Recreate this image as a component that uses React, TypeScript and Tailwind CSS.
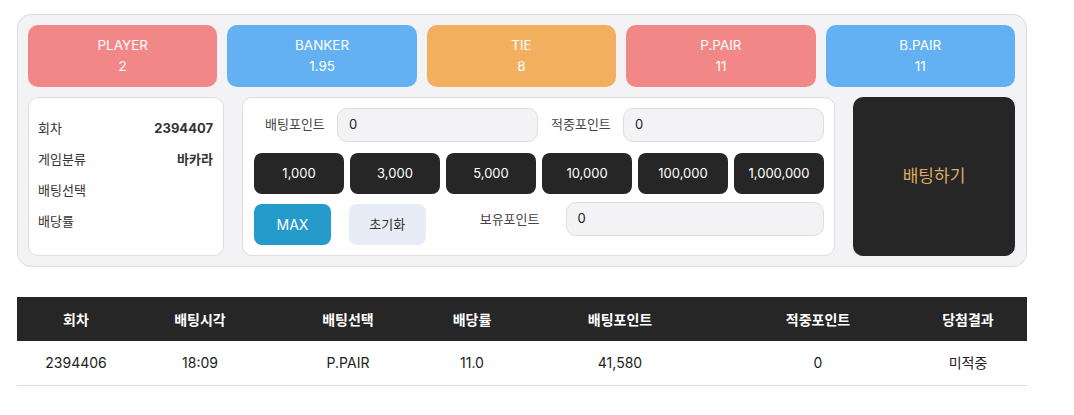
const font = { fontFamily: '"Inter", "Noto Sans CJK KR", sans-serif' };

const odds = [
  { name: "PLAYER", rate: "2", bg: "bg-[#f28787]" },
  { name: "BANKER", rate: "1.95", bg: "bg-[#63b0f2]" },
  { name: "TIE", rate: "8", bg: "bg-[#f2af5e]" },
  { name: "P.PAIR", rate: "11", bg: "bg-[#f28787]" },
  { name: "B.PAIR", rate: "11", bg: "bg-[#63b0f2]" },
];

const chips = ["1,000", "3,000", "5,000", "10,000", "100,000", "1,000,000"];

const info = [
  { k: "회차", v: "2394407" },
  { k: "게임분류", v: "바카라" },
  { k: "배팅선택", v: "" },
  { k: "배당률", v: "" },
];

const cols = [
  { t: "회차", w: "w-[118px]" },
  { t: "배팅시각", w: "w-[130px]" },
  { t: "배팅선택", w: "w-[166px]" },
  { t: "배당률", w: "w-[82px]" },
  { t: "배팅포인트", w: "w-[214px]" },
  { t: "적중포인트", w: "w-[182px]" },
  { t: "당첨결과", w: "w-[118px]" },
];

const row = ["2394406", "18:09", "P.PAIR", "11.0", "41,580", "0", "미적중"];

export default function App() {
  return (
    <div className="w-[1074px] h-[415px] bg-white text-[#222] pt-[14px] pl-[17px]" style={font}>
      <div className="w-[1010px] rounded-[14px] border border-[#dcdcdc] bg-[#f3f3f5] pt-[10px] pb-[10px] pl-[10px] pr-[11px]">
        {/* 배당 카드 */}
        <div className="grid grid-cols-5 gap-[10px]">
          {odds.map((o) => (
            <div key={o.name} className={`${o.bg} h-[62px] rounded-[10px] flex flex-col items-center justify-center text-white text-[13.5px] leading-[21px]`}>
              <span>{o.name}</span>
              <span>{o.rate}</span>
            </div>
          ))}
        </div>

        <div className="flex mt-[10px] h-[159px]">
          {/* 정보 */}
          <div className="w-[196px] rounded-[10px] border border-[#dedede] bg-white pl-[9px] pr-[10px] pt-[15px]">
            {info.map((it) => (
              <div key={it.k} className="flex justify-between items-center h-[31px] text-[13px]">
                <span className="text-[#333]">{it.k}</span>
                <span className="font-bold text-[#333]">{it.v}</span>
              </div>
            ))}
          </div>

          {/* 배팅 입력 */}
          <div className="ml-[18px] w-[593px] rounded-[10px] border border-[#dedede] bg-white pt-[10px] pl-[11px] pr-[10px]">
            <div className="flex items-center h-[34px] text-[13px]">
              <span className="ml-[11px] w-[72px] text-[#444]">배팅포인트</span>
              <div className="w-[201px] h-[34px] rounded-[10px] border border-[#dedede] bg-[#f3f3f5] flex items-center px-[11px]">0</div>
              <span className="ml-[13px] w-[72px] text-[#444]">적중포인트</span>
              <div className="w-[201px] h-[34px] rounded-[10px] border border-[#dedede] bg-[#f3f3f5] flex items-center px-[11px]">0</div>
            </div>
            <div className="grid grid-cols-6 gap-[6px] mt-[11px]">
              {chips.map((c) => (
                <button key={c} className="h-[41px] rounded-[8px] bg-[#262626] text-white text-[13px]">{c}</button>
              ))}
            </div>
            <div className="flex items-start mt-[8px] text-[13px]">
              <button className="mt-[2px] w-[77px] h-[41px] rounded-[8px] bg-[#249bcb] text-white text-[14px]">MAX</button>
              <button className="mt-[2px] ml-[18px] w-[77px] h-[41px] rounded-[8px] bg-[#e8ecf6] text-[#333]">초기화</button>
              <span className="ml-[54px] w-[86px] leading-[34px] text-[#444]">보유포인트</span>
              <div className="w-[259px] h-[34px] rounded-[10px] border border-[#dedede] bg-[#f3f3f5] flex items-center px-[11px]">0</div>
            </div>
          </div>

          {/* 배팅하기 */}
          <button className="ml-[18px] w-[162px] rounded-[10px] bg-[#262626] text-[#dcaa5e] text-[17px]">배팅하기</button>
        </div>
      </div>

      {/* 배팅 내역 */}
      <table className="mt-[30px] w-[1010px] border-collapse text-[14px]">
        <thead>
          <tr className="bg-[#262626] text-white h-[44px]">
            {cols.map((c) => (
              <th key={c.t} className={`${c.w} font-bold text-center`}>{c.t}</th>
            ))}
          </tr>
        </thead>
        <tbody>
          <tr className="h-[44px] border-b border-[#dcdcdc]">
            {row.map((v, i) => (
              <td key={i} className="text-center text-[#222]">{v}</td>
            ))}
          </tr>
        </tbody>
      </table>
    </div>
  );
}
